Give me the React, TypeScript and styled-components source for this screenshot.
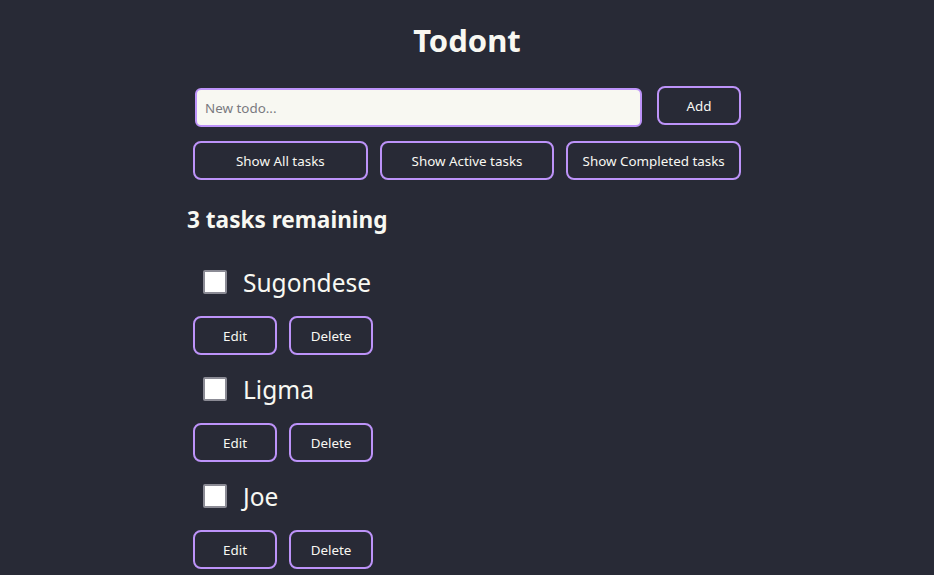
import React, { useState } from "react";
import styled, { createGlobalStyle } from "styled-components";

const Global = createGlobalStyle`
  html, body { margin: 0; padding: 0; background: #282a36; }
  body { font-family: "Noto Sans", "Open Sans", sans-serif; color: #f8f8f2; }
  * { box-sizing: border-box; }
`;

const Page = styled.div`
  width: 548px;
  margin: 0 auto;
  padding-top: 20px;
  display: flex;
  flex-direction: column;
`;

const Title = styled.h1`
  margin: 0;
  font-size: 31px;
  line-height: 40px;
  font-weight: 700;
  text-align: center;
  color: #f8f8f2;
`;

const FormRow = styled.form`
  margin-top: 26px;
  display: flex;
  align-items: flex-start;
  gap: 15px;
`;

const Input = styled.input`
  margin: 2px 0 0 2px;
  width: 447px;
  height: 39px;
  border: 2px solid #bd93f9;
  border-radius: 6px;
  background: #f8f8f2;
  padding: 0 8px;
  font-family: "Noto Sans", sans-serif;
  font-size: 13.4px;
  color: #282a36;
  outline: none;
  &::placeholder { color: #7a7a80; }
`;

const Button = styled.button<{ $w?: number }>`
  width: ${(p) => (p.$w ? `${p.$w}px` : "auto")};
  flex: ${(p) => (p.$w ? "none" : "1")};
  height: 39px;
  border: 2px solid #bd93f9;
  border-radius: 8px;
  background: transparent;
  color: #f8f8f2;
  font-family: "Noto Sans", sans-serif;
  font-size: 13.4px;
  cursor: pointer;
  padding: 0;
`;

const FilterRow = styled.div`
  margin-top: 14px;
  display: flex;
  gap: 12px;
`;

const Heading = styled.h2`
  margin: 25px 0 0 -6px;
  font-size: 22.6px;
  line-height: 30px;
  font-weight: 700;
  color: #f8f8f2;
`;

const List = styled.ul`
  list-style: none;
  margin: 27px 0 0 0;
  padding: 0;
`;

const Item = styled.li`
  display: flex;
  flex-direction: column;
  gap: 14px;
  margin-bottom: 14px;
`;

const CheckRow = styled.label`
  height: 40px;
  display: flex;
  align-items: center;
  gap: 16px;
  padding-left: 10px;
`;

const Box = styled.span`
  width: 24px;
  height: 24px;
  background: #ffffff;
  border: 2px solid #8b8b95;
  border-radius: 2px;
`;

const Name = styled.span`
  font-size: 24.5px;
  color: #f8f8f2;
`;

const Actions = styled.div`
  display: flex;
  gap: 12px;
`;

const tasks = ["Sugondese", "Ligma", "Joe"];

export default function App() {
  const [text, setText] = useState("");
  return (
    <>
      <Global />
      <Page>
        <Title>Todont</Title>
        <FormRow onSubmit={(e) => e.preventDefault()}>
          <Input
            placeholder="New todo..."
            value={text}
            onChange={(e) => setText(e.target.value)}
          />
          <Button $w={84} type="submit">Add</Button>
        </FormRow>
        <FilterRow>
          <Button>Show All tasks</Button>
          <Button>Show Active tasks</Button>
          <Button>Show Completed tasks</Button>
        </FilterRow>
        <Heading>3 tasks remaining</Heading>
        <List>
          {tasks.map((t) => (
            <Item key={t}>
              <CheckRow>
                <Box />
                <Name>{t}</Name>
              </CheckRow>
              <Actions>
                <Button $w={84}>Edit</Button>
                <Button $w={84}>Delete</Button>
              </Actions>
            </Item>
          ))}
        </List>
      </Page>
    </>
  );
}
